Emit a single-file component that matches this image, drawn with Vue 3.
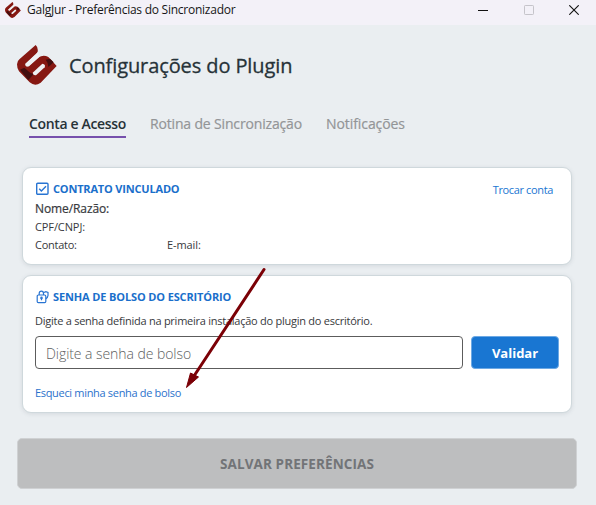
<script setup>
import { ref } from 'vue'

const tabs = ['Conta e Acesso', 'Rotina de Sincronização', 'Notificações']
const active = ref(0)
const password = ref('')
</script>

<template>
  <div class="window">
    <svg class="defs" width="0" height="0" aria-hidden="true">
      <symbol id="logo" viewBox="0 0 120 120">
        <path class="red" d="M56 0Q64 7 62 20L58 27L26 56Q24 66 35 63L65 37Q79 28 94 36L119 63L71 113Q54 126 38 112L6 79Q0 71 0 58Q0 48 8 42Z" />
        <path class="dark" d="M86 44L99 41L110 52L94 66Q94 53 86 44Z" />
        <path class="dark" d="M9 74L22 68Q30 74 34 79Q40 87 51 86L34 105Z" />
        <path class="gap" d="M62 22L25 56Q24 67 36 64L68 35Z" />
        <path class="gap" d="M76 56Q87 58 83 67L58 90Q49 93 47 83Z" />
      </symbol>
    </svg>

    <header class="titlebar">
      <svg class="app-icon"><use href="#logo" /></svg>
      <span class="app-title">GalgJur - Preferências do Sincronizador</span>
      <div class="controls">
        <svg viewBox="0 0 10 10"><path d="M0 5.5H10" stroke="#111" /></svg>
        <svg viewBox="0 0 10 10"><rect x=".5" y=".5" width="9" height="9" rx=".7" stroke="#c5c4ca" /></svg>
        <svg viewBox="0 0 10 10"><path d="M.3 .3L9.7 9.7M9.7 .3L.3 9.7" stroke="#111" stroke-width="1.1" /></svg>
      </div>
    </header>

    <div class="heading">
      <svg class="brand"><use href="#logo" /></svg>
      <h1>Configurações do Plugin</h1>
    </div>

    <nav class="tabs">
      <button
        v-for="(tab, i) in tabs"
        :key="tab"
        :class="['tab', 'tab-' + i, { active: i === active }]"
        @click="active = i"
      >{{ tab }}</button>
    </nav>

    <main class="cards">
      <section class="card contract">
        <div class="card-head">
          <svg class="icon" viewBox="0 0 14 14">
            <rect x="1.7" y="1.2" width="11.3" height="11.1" rx="1" stroke-width="1.4" />
            <path d="M4.2 6.7L6.4 9L11 4.3" stroke-width="1.4" />
          </svg>
          <h2>CONTRATO VINCULADO</h2>
          <a class="switch">Trocar conta</a>
        </div>
        <p class="name">Nome/Razão:</p>
        <p class="line cpf">CPF/CNPJ:</p>
        <div class="contact">
          <p class="line phone">Contato:</p>
          <p class="line">E-mail:</p>
        </div>
      </section>

      <section class="card secret">
        <div class="card-head">
          <svg class="icon" viewBox="0 0 14 14">
            <rect x="2.2" y="5" width="8.6" height="7.6" rx="1.2" />
            <path d="M4.2 5V3.4Q4.2 1.2 6.4 1.2Q8.5 1.2 8.5 3.4V5M6.5 8V10.2" />
            <circle cx="6.5" cy="7.9" r=".7" />
            <path d="M8.8 2.5L10.8 1.7L13 2.5V5.5Q12.8 7.6 10.9 8.7" />
          </svg>
          <h2 class="wide">SENHA DE BOLSO DO ESCRITÓRIO</h2>
        </div>
        <p class="hint">Digite a senha definida na primeira instalação do plugin do escritório.</p>
        <div class="form">
          <input v-model="password" placeholder="Digite a senha de bolso" />
          <button class="validate">Validar</button>
        </div>
        <a class="forgot">Esqueci minha senha de bolso</a>
      </section>
    </main>

    <button class="save" disabled>SALVAR PREFERÊNCIAS</button>

    <svg class="pointer" viewBox="0 0 84 124">
      <path d="M80 3.5L10 110" stroke="#7b0006" stroke-width="3" stroke-linecap="round" />
      <path d="M2.5 121.5L6.5 107L14.5 111Z" fill="#7b0006" stroke="#7b0006" stroke-linejoin="round" />
    </svg>
  </div>
</template>

<style>
body {
  background: #eaeef1;
}
</style>

<style scoped>
.window {
  position: relative;
  box-sizing: border-box;
  width: 596px;
  height: 505px;
  overflow: hidden;
  background: #eaeef1;
  color: #37393c;
  font-family: "Open Sans", "Noto Sans", sans-serif;
}
.window * {
  box-sizing: border-box;
}
svg {
  display: block;
  fill: none;
}
.defs {
  position: absolute;
}
.red {
  fill: #861812;
}
.dark {
  fill: #430e0f;
}
.gap {
  fill: #eef1f3;
}
h1, h2, p {
  margin: 0;
}
button {
  font-family: inherit;
}
.titlebar {
  display: flex;
  align-items: center;
  height: 25px;
  padding: 0 17px 6px 5px;
  background: #f3f1f8;
}
.app-icon {
  width: 16px;
  height: 16px;
  margin-right: 6px;
}
.app-title {
  color: #161616;
  font-size: 12px;
  line-height: 18px;
  letter-spacing: -0.25px;
}
.controls {
  display: flex;
  gap: 35.5px;
  margin-left: auto;
}
.controls svg {
  width: 10px;
  height: 10px;
}
.heading {
  display: flex;
  align-items: center;
  gap: 12px;
  height: 40px;
  margin: 20px 0 0 17px;
}
.brand {
  width: 40px;
  height: 40px;
}
h1 {
  padding-top: 2px;
  color: #263238;
  font-size: 20px;
  font-weight: 500;
  line-height: 40px;
  letter-spacing: -0.1px;
  -webkit-text-stroke: 0.3px #263238;
}
.tabs {
  display: flex;
  gap: 24px;
  height: 24px;
  margin: 29px 0 0 29px;
}
.tab {
  padding: 0 0 2px;
  border: 0;
  border-bottom: 2px solid transparent;
  background: none;
  color: #939597;
  font-size: 14px;
  font-weight: 500;
  line-height: 20px;
  white-space: nowrap;
  -webkit-text-stroke: 0.2px #939597;
}
.tab-0 {
  letter-spacing: -0.34px;
}
.tab-1 {
  letter-spacing: -0.16px;
}
.tab-2 {
  letter-spacing: -0.08px;
}
.tab.active {
  border-color: #7650ac;
  color: #263238;
  font-weight: 600;
  -webkit-text-stroke: 0;
}
.cards {
  display: flex;
  flex-direction: column;
  gap: 10px;
  margin: 29px 24px 0 22px;
}
.card {
  padding: 12px 12px 0;
  border: 1px solid #cfd8dc;
  border-radius: 9px;
  background: #fff;
  box-shadow: 0 1px 4px rgba(60, 80, 90, 0.13);
}
.contract {
  height: 98px;
}
.secret {
  height: 138px;
}
.card-head {
  display: flex;
  align-items: center;
  height: 18px;
}
.icon {
  width: 14px;
  height: 14px;
  margin-right: 4px;
  stroke: #2874d2;
  stroke-width: 1.2;
}
h2 {
  color: #1a6fcb;
  font-size: 11px;
  font-weight: 700;
  line-height: 18px;
  letter-spacing: -0.18px;
}
h2.wide {
  letter-spacing: -0.13px;
}
.switch {
  margin: 2px 6px 0 auto;
  color: #1976d2;
  font-size: 11px;
  line-height: 18px;
  letter-spacing: -0.36px;
}
.name {
  margin-top: 1px;
  font-size: 12px;
  font-weight: 500;
  line-height: 19px;
  letter-spacing: -0.1px;
  -webkit-text-stroke: 0.2px #37393c;
}
.line {
  font-size: 11px;
  line-height: 18px;
  letter-spacing: -0.1px;
}
.contact {
  display: grid;
  grid-template-columns: 132px 1fr;
}
.phone {
  letter-spacing: -0.25px;
}
.hint {
  margin-top: 6px;
  font-size: 11px;
  line-height: 18px;
  letter-spacing: -0.25px;
}
.form {
  display: flex;
  gap: 8px;
  height: 33px;
  margin-top: 6px;
}
input {
  width: 428px;
  height: 33px;
  padding: 1px 10px 0;
  border: 1px solid #5c5c5c;
  border-radius: 4px;
  outline: 0;
  background: #fff;
  font-family: inherit;
  font-size: 14px;
  font-weight: 300;
  letter-spacing: -0.06px;
}
input::placeholder {
  color: #5c5e60;
  opacity: 1;
}
.validate {
  width: 88px;
  height: 33px;
  padding: 2px 0 0;
  border: 1px solid #6da9e4;
  border-radius: 4px;
  background: #1976d2;
  color: #fff;
  font-size: 13px;
  font-weight: 700;
  line-height: 29px;
}
.forgot {
  display: block;
  margin-top: 15px;
  color: #2b72cc;
  font-size: 11px;
  line-height: 18px;
  letter-spacing: -0.32px;
}
.save {
  display: block;
  width: 560px;
  height: 51px;
  margin: 25px 0 0 17px;
  padding: 2px 0 0;
  border: 1px solid #cfd1d3;
  border-radius: 5px;
  background: #bdbebf;
  color: #727477;
  font-size: 13.5px;
  font-weight: 700;
  line-height: 47px;
  letter-spacing: 0.1px;
}
.pointer {
  position: absolute;
  top: 265.5px;
  left: 183.5px;
  width: 84px;
  height: 124px;
  pointer-events: none;
}
</style>
